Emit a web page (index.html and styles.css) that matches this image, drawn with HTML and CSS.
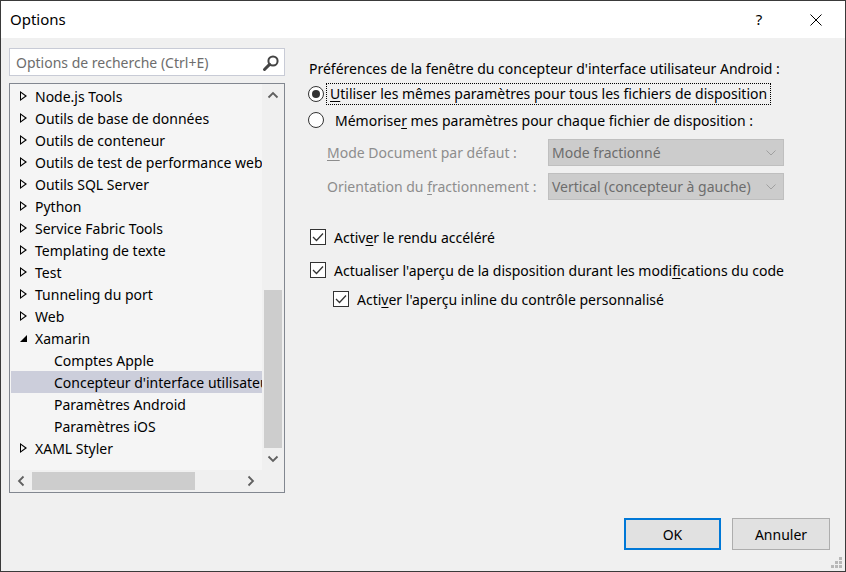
FILE: index.html
```html
<!DOCTYPE html>
<html lang="fr">
<head>
<meta charset="utf-8">
<title>Options</title>
<link rel="stylesheet" href="styles.css">
</head>
<body>
<div class="window">
  <div class="titlebar">
    <span class="title">Options</span>
    <span class="tb-help">?</span>
    <span class="tb-close">
      <svg width="12" height="12" viewBox="0 0 12 12"><path d="M0.5 0.5 L11.5 11.5 M11.5 0.5 L0.5 11.5" stroke="#000" stroke-width="1" fill="none"/></svg>
    </span>
  </div>
  <div class="content">
    <div class="main">
      <div class="left">
        <div class="search">
          <span class="search-text">Options de recherche (Ctrl+E)</span>
          <svg class="search-icon" width="18" height="18" viewBox="0 0 18 18"><circle cx="11" cy="7" r="4.6" fill="none" stroke="#444" stroke-width="2"/><path d="M7.6 10.4 L2.5 15.5" stroke="#444" stroke-width="3" stroke-linecap="round"/></svg>
        </div>
        <div class="tree">
          <div class="tree-top">
            <div class="rows">
              <div class="row"><span class="tri"></span>Node.js Tools</div>
              <div class="row"><span class="tri"></span>Outils de base de données</div>
              <div class="row"><span class="tri"></span>Outils de conteneur</div>
              <div class="row"><span class="tri"></span>Outils de test de performance web</div>
              <div class="row"><span class="tri"></span>Outils SQL Server</div>
              <div class="row"><span class="tri"></span>Python</div>
              <div class="row"><span class="tri"></span>Service Fabric Tools</div>
              <div class="row"><span class="tri"></span>Templating de texte</div>
              <div class="row"><span class="tri"></span>Test</div>
              <div class="row"><span class="tri"></span>Tunneling du port</div>
              <div class="row"><span class="tri"></span>Web</div>
              <div class="row"><span class="tri open"></span>Xamarin</div>
              <div class="row child">Comptes Apple</div>
              <div class="row child selected">Concepteur d'interface utilisateur</div>
              <div class="row child">Paramètres Android</div>
              <div class="row child">Paramètres iOS</div>
              <div class="row"><span class="tri"></span>XAML Styler</div>
            </div>
            <div class="vscroll">
              <div class="arrow-box"><svg width="12" height="8" viewBox="0 0 12 8"><path d="M1.5 6.5 L6 2 L10.5 6.5" stroke="#606060" stroke-width="1.8" fill="none"/></svg></div>
              <div class="vtrack"><div class="vthumb"></div></div>
              <div class="arrow-box"><svg width="12" height="8" viewBox="0 0 12 8"><path d="M1.5 1.5 L6 6 L10.5 1.5" stroke="#606060" stroke-width="1.8" fill="none"/></svg></div>
            </div>
          </div>
          <div class="hscroll">
            <div class="harrow"><svg width="8" height="12" viewBox="0 0 8 12"><path d="M6.5 1.5 L2 6 L6.5 10.5" stroke="#606060" stroke-width="1.8" fill="none"/></svg></div>
            <div class="htrack"><div class="hthumb"></div></div>
            <div class="harrow"><svg width="8" height="12" viewBox="0 0 8 12"><path d="M1.5 1.5 L6 6 L1.5 10.5" stroke="#606060" stroke-width="1.8" fill="none"/></svg></div>
            <div class="corner"></div>
          </div>
        </div>
      </div>
      <div class="right">
        <div class="heading">Préférences de la fenêtre du concepteur d'interface utilisateur Android :</div>
        <div class="radio-row">
          <span class="radio checked"></span>
          <span class="focus-label"><u>U</u>tiliser les mêmes paramètres pour tous les fichiers de disposition</span>
        </div>
        <div class="radio-row second">
          <span class="radio"></span>
          <span class="label2">Mémorise<u>r</u> mes paramètres pour chaque fichier de disposition :</span>
        </div>
        <div class="field-grid">
          <span class="field-label"><u>M</u>ode Document par défaut :</span>
          <div class="combo"><span>Mode fractionné</span><svg width="10" height="6" viewBox="0 0 10 6"><path d="M0.5 0.5 L5 5 L9.5 0.5" stroke="#a0a0a0" stroke-width="1" fill="none"/></svg></div>
          <span class="field-label">Orientation du <u>f</u>ractionnement :</span>
          <div class="combo"><span>Vertical (concepteur à gauche)</span><svg width="10" height="6" viewBox="0 0 10 6"><path d="M0.5 0.5 L5 5 L9.5 0.5" stroke="#a0a0a0" stroke-width="1" fill="none"/></svg></div>
        </div>
        <div class="check-row first">
          <span class="check"><svg width="12" height="10" viewBox="0 0 12 10"><path d="M1 5 L4.5 8.5 L11 1.5" stroke="#333" stroke-width="1.3" fill="none"/></svg></span>
          <span>Activ<u>e</u>r le rendu accéléré</span>
        </div>
        <div class="check-row second">
          <span class="check"><svg width="12" height="10" viewBox="0 0 12 10"><path d="M1 5 L4.5 8.5 L11 1.5" stroke="#333" stroke-width="1.3" fill="none"/></svg></span>
          <span>Actualiser l'aperçu de la disposition durant les modi<u>f</u>ications du code</span>
        </div>
        <div class="check-row sub">
          <span class="check"><svg width="12" height="10" viewBox="0 0 12 10"><path d="M1 5 L4.5 8.5 L11 1.5" stroke="#333" stroke-width="1.3" fill="none"/></svg></span>
          <span>Acti<u>v</u>er l'aperçu inline du contrôle personnalisé</span>
        </div>
      </div>
    </div>
    <div class="buttons">
      <button class="btn default">OK</button>
      <button class="btn">Annuler</button>
    </div>
    <svg class="grip" width="12" height="12" viewBox="0 0 12 12" fill="#b8b8b8">
      <rect x="8" y="0" width="3" height="3"/>
      <rect x="4" y="4" width="3" height="3"/><rect x="8" y="4" width="3" height="3"/>
      <rect x="0" y="8" width="3" height="3"/><rect x="4" y="8" width="3" height="3"/><rect x="8" y="8" width="3" height="3"/>
    </svg>
  </div>
</div>
</body>
</html>
```

FILE: styles.css
```css
* { box-sizing: border-box; }
html, body { margin: 0; padding: 0; }
body {
  font-family: "Noto Sans", "Open Sans", "Liberation Sans", sans-serif;
  font-size: 14px;
  color: #000;
  background: #f0f0f0;
}
u { text-decoration: underline; text-underline-offset: 2px; }

.window {
  width: 846px;
  height: 572px;
  border: 1px solid #3a3a3a;
  display: flex;
  flex-direction: column;
  background: #f0f0f0;
}

.titlebar {
  height: 37px;
  background: #fff;
  display: flex;
  align-items: center;
  padding-left: 9px;
  flex: none;
}
.title { font-size: 15px; flex: 1; padding-bottom: 2px; }
.tb-help { width: 46px; text-align: center; font-size: 15px; margin-right: 11px; padding-bottom: 2px; }
.tb-close { width: 46px; display: flex; justify-content: center; margin-right: 6px; }

.content {
  flex: 1;
  display: flex;
  flex-direction: column;
  position: relative;
  padding: 10px 0 0 8px;
}

.main {
  flex: 1;
  display: flex;
}

.left {
  width: 276px;
  display: flex;
  flex-direction: column;
  gap: 7px;
}

.search {
  height: 28px;
  background: #fff;
  border: 1px solid #c8cbd6;
  display: flex;
  align-items: center;
  padding: 0 4px 0 6px;
}
.search-text { flex: 1; color: #6d6d6d; font-size: 14px; }
.search-icon { margin-top: 1px; }

.tree {
  height: 410px;
  border: 1px solid #828790;
  background: #f5f5f5;
  display: flex;
  flex-direction: column;
}
.tree-top { flex: 1; display: flex; min-height: 0; }
.rows {
  flex: 1;
  overflow: hidden;
  padding-top: 1px;
  padding-left: 1px;
}
.row {
  height: 22px;
  display: flex;
  align-items: center;
  white-space: nowrap;
  padding-left: 9px;
  font-size: 14px;
}
.row.child { padding-left: 43px; }
.row.selected { background: #cccedb; }

.tri {
  width: 7px;
  height: 10px;
  margin-right: 8px;
  flex: none;
  position: relative;
  background: #000;
  clip-path: polygon(0 0, 100% 50%, 0 100%);
}
.tri::after {
  content: "";
  position: absolute;
  left: 1px; top: 2px;
  width: 4px; height: 6px;
  background: #f5f5f5;
  clip-path: polygon(0 0, 100% 50%, 0 100%);
}
.tri.open {
  width: 7px;
  height: 7px;
  clip-path: polygon(100% 0, 100% 100%, 0 100%);
  margin-top: 1px;
}
.tri.open::after { display: none; }

.vscroll {
  width: 22px;
  background: #f0f0f0;
  display: flex;
  flex-direction: column;
}
.arrow-box { height: 22px; display: flex; align-items: center; justify-content: center; flex: none; }
.vtrack { flex: 1; display: flex; flex-direction: column; padding: 0 2px; }
.vtrack::before { content: ""; height: 184px; flex: none; }
.vthumb { height: 158px; background: #cdcdcd; }

.hscroll {
  height: 22px;
  flex: none;
  display: flex;
  background: #f0f0f0;
}
.harrow { width: 22px; display: flex; align-items: center; justify-content: center; flex: none; }
.htrack { flex: 1; display: flex; align-items: center; }
.hthumb { width: 163px; height: 18px; background: #cdcdcd; }
.corner { width: 22px; background: #f0f0f0; }

.right {
  flex: 1;
  padding-left: 24px;
  padding-top: 9px;
}
.heading { height: 22px; display: flex; align-items: center; }

.radio-row { display: flex; align-items: center; height: 22px; margin-top: 4px; margin-left: -1px; }
.radio-row.second { margin-top: 4px; }
.radio {
  width: 16px; height: 16px;
  border: 1px solid #333;
  border-radius: 50%;
  background: #fff;
  display: flex; align-items: center; justify-content: center;
  flex: none;
  margin-right: 3px;
}
.radio.checked::after {
  content: "";
  width: 8px; height: 8px;
  border-radius: 50%;
  background: #333;
}
.focus-label { outline: 1px dotted #000; padding: 0 3px 1px 3px; }
.label2 { padding-left: 8px; }

.field-grid {
  display: grid;
  grid-template-columns: 221px 236px;
  row-gap: 7px;
  align-items: center;
  margin-top: 8px;
  margin-left: 18px;
  color: #8d8d8d;
}
.field-label { white-space: nowrap; }
.combo {
  height: 27px;
  background: #cccccc;
  border: 1px solid #bfbfbf;
  display: flex;
  align-items: center;
  justify-content: space-between;
  padding: 0 7px 0 3px;
  color: #6d6d6d;
}

.check-row { display: flex; align-items: center; height: 22px; }
.check-row.first { margin-top: 26px; }
.check-row.second { margin-top: 11px; }
.check-row.sub { margin-top: 7px; margin-left: 23px; }
.check {
  width: 16px; height: 16px;
  border: 1px solid #333;
  background: #fff;
  display: flex; align-items: center; justify-content: center;
  margin-right: 8px;
  margin-left: 1px;
  flex: none;
}

.buttons {
  height: 66px;
  flex: none;
  display: flex;
  justify-content: flex-end;
  gap: 11px;
  padding: 13px 15px 0 0;
}
.btn {
  width: 98px;
  height: 32px;
  background: #e1e1e1;
  border: 1px solid #adadad;
  font-family: inherit;
  font-size: 14px;
  color: #000;
  padding: 0;
}
.btn.default { border: 2px solid #0078d7; width: 97px; }

.grip { position: absolute; right: 2px; bottom: 2px; }
```
